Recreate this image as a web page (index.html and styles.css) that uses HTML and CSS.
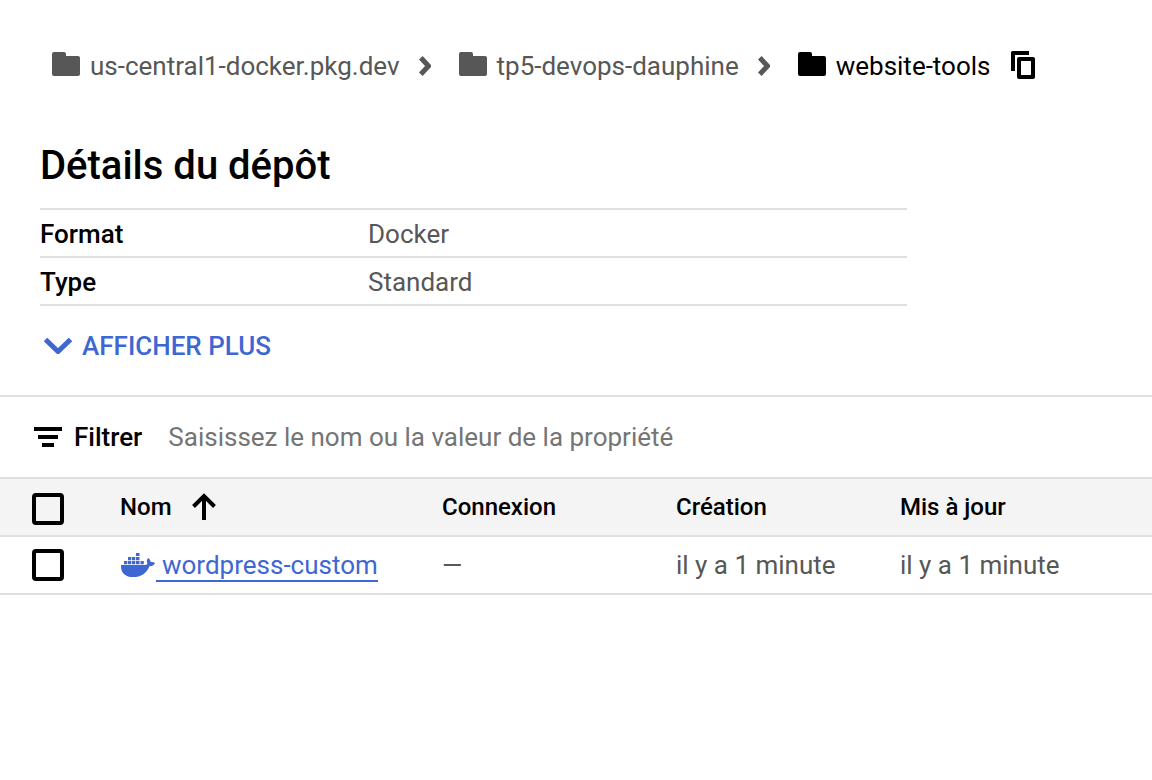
FILE: index.html
```html
<!DOCTYPE html>
<html lang="fr">
<head>
<meta charset="utf-8">
<meta name="viewport" content="width=device-width, initial-scale=1">
<title>Détails du dépôt</title>
<link rel="stylesheet" href="styles.css">
</head>
<body>
<nav class="breadcrumb" aria-label="Fil d'Ariane">
  <a class="crumb" href="#"><svg class="folder" viewBox="0 0 28 24" aria-hidden="true"><path d="M2 0h10q2 0 2 2v2h12q2 0 2 2v16q0 2-2 2H2q-2 0-2-2V2q0-2 2-2z"/></svg>us-central1-docker.pkg.dev</a>
  <svg class="separator" viewBox="0 0 12 20" aria-hidden="true"><path d="M1.800 1.800 9.500 10l-7.700 8.200"/></svg>
  <a class="crumb" href="#"><svg class="folder" viewBox="0 0 28 24" aria-hidden="true"><path d="M2 0h10q2 0 2 2v2h12q2 0 2 2v16q0 2-2 2H2q-2 0-2-2V2q0-2 2-2z"/></svg>tp5-devops-dauphine</a>
  <svg class="separator" viewBox="0 0 12 20" aria-hidden="true"><path d="M1.800 1.800 9.500 10l-7.700 8.200"/></svg>
  <a class="crumb current" href="#" aria-current="page"><svg class="folder" viewBox="0 0 28 24" aria-hidden="true"><path d="M2 0h10q2 0 2 2v2h12q2 0 2 2v16q0 2-2 2H2q-2 0-2-2V2q0-2 2-2z"/></svg>website-tools</a>
  <button class="copy" type="button" aria-label="Copier"><svg class="copy-icon" viewBox="0 0 24 28" aria-hidden="true"><path fill-rule="evenodd" d="M0 1.500Q0 0 1.500 0H18v4H4v16H0zM8 6h14q2 0 2 2v18q0 2-2 2H8q-2 0-2-2V8q0-2 2-2zm2 4v14h10V10z"/></svg></button>
</nav>
<main>
  <section class="details">
    <h1 class="title">Détails du dépôt</h1>
    <table class="facts">
      <tbody>
        <tr><th scope="row">Format</th><td>Docker</td></tr>
        <tr><th scope="row">Type</th><td>Standard</td></tr>
      </tbody>
    </table>
    <button class="more" type="button"><svg class="more-icon" viewBox="0 0 28 16" aria-hidden="true"><path d="M1.500 1.500 14 13.500l12.500-12"/></svg>AFFICHER PLUS</button>
  </section>
  <section class="listing">
    <div class="filter">
      <svg class="filter-icon" viewBox="0 0 28 20" aria-hidden="true"><path d="M0 0h28v4H0zM4 8h20v4H4zM8 16h12v4H8z"/></svg>
      <label class="filter-label" for="filter">Filtrer</label>
      <input class="filter-input" id="filter" type="text" placeholder="Saisissez le nom ou la valeur de la propriété">
    </div>
    <table class="images">
      <colgroup><col class="col-check"><col class="col-name"><col class="col-link"><col class="col-created"><col></colgroup>
      <thead>
        <tr>
          <th class="check" scope="col"><input class="box" type="checkbox" aria-label="Tout sélectionner"></th>
          <th scope="col"><button class="sort" type="button">Nom<svg class="sort-icon" viewBox="0 0 24 28" aria-hidden="true"><path d="M12 27V3M1.500 13.500 12 3l10.500 10.500"/></svg></button></th>
          <th scope="col">Connexion</th>
          <th scope="col">Création</th>
          <th scope="col">Mis à jour</th>
        </tr>
      </thead>
      <tbody>
        <tr>
          <td class="check"><input class="box" type="checkbox" aria-label="Sélectionner wordpress-custom"></td>
          <td><div class="image"><svg class="docker" viewBox="0 0 34 24" aria-hidden="true"><path d="M15 0h3.500v3H15zM7 4h3.300v3.300H7zM11 4h3.300v3.300H11zM15 4h3.500v3.300H15zM3 8h3.300v3.300H3zM7 8h3.300v3.300H7zM11 8h3.300v3.300H11zM15 8h3.500v3.300H15zM19.500 8h3.300v3.300h-3.300zM0 12h23.500q2 0 3-1c-1-2-1-4 .500-6 1.700 1 2.500 2.500 2.700 4 1.700-.200 3.300.100 4.300 1-.900 2.200-3 3.200-5.500 3.200C25.500 20.500 20 24 12 24 4 24-.500 19.500 0 12z"/></svg><a class="image-link" href="#">wordpress-custom</a></div></td>
          <td>—</td>
          <td>il y a 1 minute</td>
          <td>il y a 1 minute</td>
        </tr>
      </tbody>
    </table>
  </section>
</main>
</body>
</html>
```
FILE: styles.css
```css
* { box-sizing: border-box; }

body {
  margin: 0;
  background: #fff;
  color: #000;
  font-family: Roboto, "Liberation Sans", sans-serif;
  font-size: 26px;
  line-height: 32px;
}

svg { flex: none; fill: currentColor; }

button {
  padding: 0;
  border: 0;
  background: none;
  color: inherit;
  font: inherit;
  cursor: pointer;
}

a { text-decoration: none; }

.breadcrumb {
  display: flex;
  align-items: center;
  padding: 50px 52px 0;
}

.crumb {
  display: flex;
  align-items: center;
  gap: 10px;
  color: #575757;
  white-space: nowrap;
}

.crumb.current { color: #000; }

.folder { width: 28px; height: 24px; margin-bottom: 4px; }

.separator {
  width: 12px;
  height: 20px;
  margin: 0 28px 0 19px;
  color: #575757;
}

.separator path,
.more-icon path,
.sort-icon path {
  fill: none;
  stroke: currentColor;
  stroke-width: 4;
}

.separator path { stroke-width: 5; }

.copy { display: flex; margin: 0 0 2px 20px; }
.copy-icon { width: 24px; height: 28px; }

.details { padding: 60px 40px 33px; }

.title {
  margin: 0 0 18px;
  font-size: 40px;
  font-weight: 500;
  line-height: 48px;
}

.facts {
  width: 100%;
  max-width: 867px;
  border-collapse: separate;
  border-spacing: 0;
  border-top: 2px solid #e0e0e0;
  table-layout: fixed;
}

.facts th,
.facts td {
  height: 48px;
  padding: 2px 0 0;
  border-bottom: 2px solid #e0e0e0;
  text-align: left;
}

.facts th { width: 328px; font-weight: 500; }
.facts td { color: #575757; }

.more {
  display: flex;
  align-items: center;
  gap: 10px;
  margin-top: 24px;
  padding-left: 4px;
  color: #3f67d2;
  font-weight: 500;
}

.more-icon { width: 28px; height: 16px; }
.more-icon path { stroke-width: 5; }

.listing { border-top: 2px solid #e0e0e0; }

.filter {
  display: flex;
  align-items: center;
  height: 80px;
  padding: 0 34px;
}

.filter-icon { width: 28px; height: 20px; }

.filter-label { margin: 0 26px 0 12px; font-weight: 500; }

.filter-input {
  flex: 1;
  min-width: 0;
  padding: 0;
  border: 0;
  outline: 0;
  background: none;
  color: #000;
  font: inherit;
}

.filter-input::placeholder { color: #757575; opacity: 1; }

.images {
  width: 100%;
  border-collapse: separate;
  border-spacing: 0;
  border-top: 2px solid #e0e0e0;
  table-layout: fixed;
}

.col-check { width: 120px; }
.col-name { width: 322px; }
.col-link { width: 234px; }
.col-created { width: 224px; }

.images th,
.images td {
  height: 58px;
  padding: 0;
  border-bottom: 2px solid #e0e0e0;
  text-align: left;
}

.images th {
  background: #f4f4f4;
  font-size: 24px;
  font-weight: 500;
}

.images td { color: #575757; }

.images .check { padding-left: 32px; }
.images th.check { padding-top: 4px; }

.box {
  display: block;
  width: 32px;
  height: 32px;
  margin: 0;
  border: 4px solid #000;
  border-radius: 4px;
  background: transparent;
  appearance: none;
}

.box:checked { background: #3f67d2; }

.sort { display: flex; align-items: center; gap: 20px; }
.sort-icon { width: 24px; height: 28px; }

.image { display: flex; align-items: center; gap: 1px; padding-left: 1px; }
.docker { width: 34px; height: 24px; color: #3f67d2; }

.image-link {
  padding: 2px 0 0 6px;
  border-bottom: 2px solid #3f67d2;
  line-height: 30px;
  color: #3f67d2;
}
```
